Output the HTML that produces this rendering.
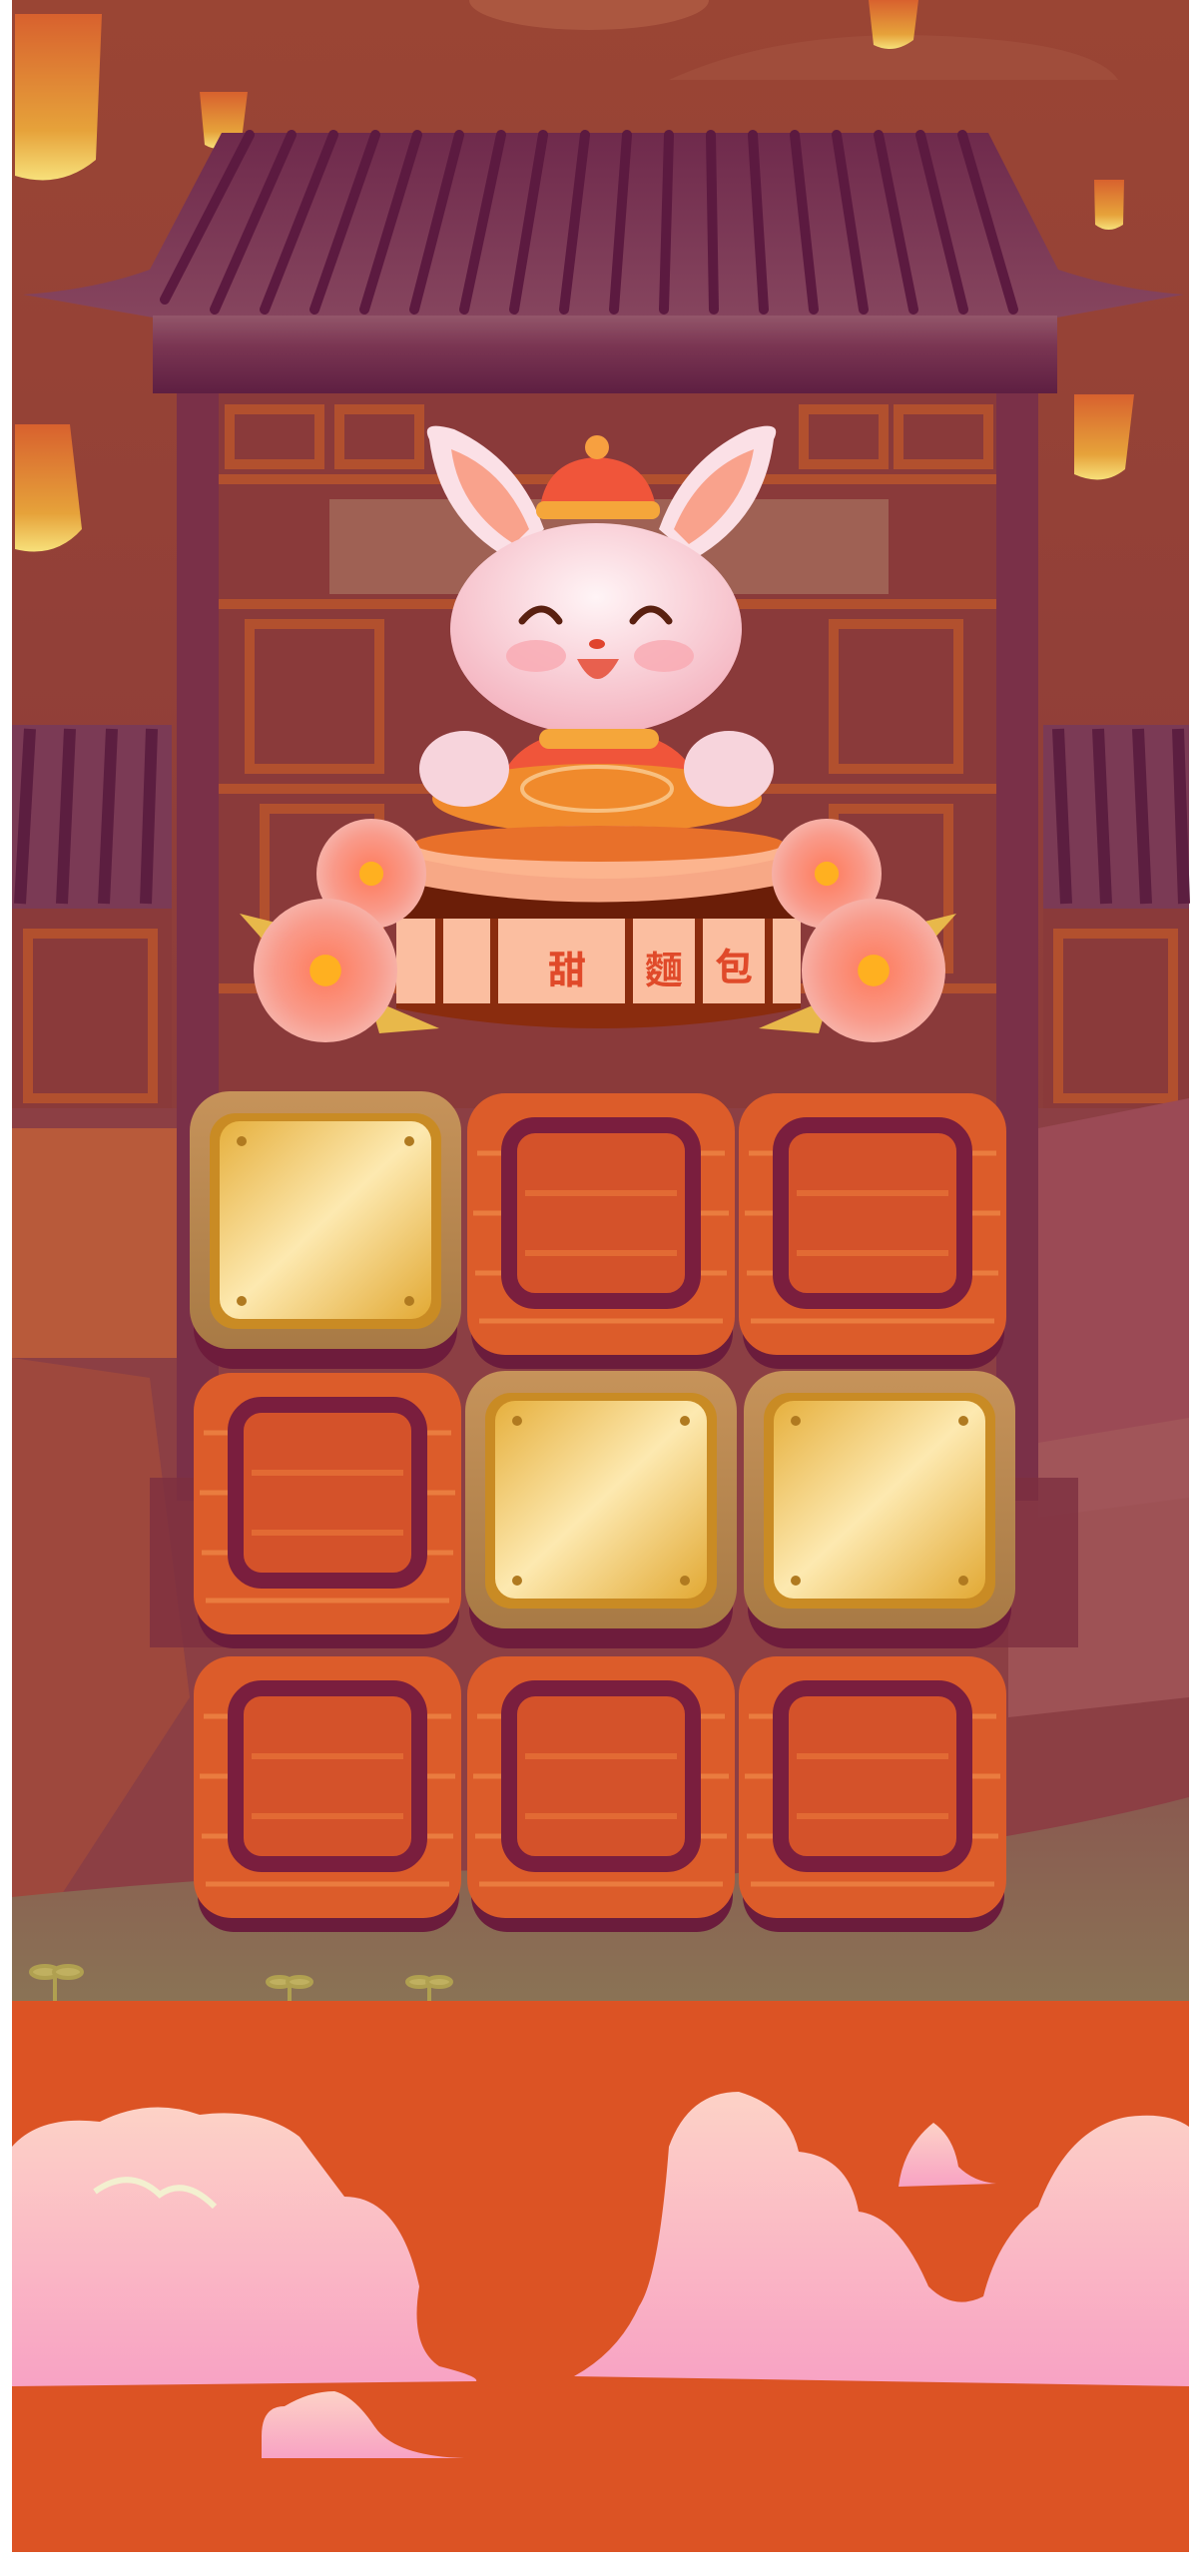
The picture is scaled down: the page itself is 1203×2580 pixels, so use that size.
<!DOCTYPE html>
<html><head><meta charset="utf-8"><style>
html,body{margin:0;padding:0;background:#fff;width:1203px;height:2580px;overflow:hidden}
svg{display:block}
</style></head><body>
<svg width="1203" height="2580" viewBox="0 0 1203 2580" xmlns="http://www.w3.org/2000/svg">
<defs>
<linearGradient id="sky" x1="0" y1="0" x2="0" y2="1"><stop offset="0" stop-color="#9a4534"/><stop offset="0.5" stop-color="#8e3d3a"/><stop offset="1" stop-color="#7c3a45"/></linearGradient>
<linearGradient id="roof" x1="0" y1="0" x2="0" y2="1"><stop offset="0" stop-color="#6f2a4c"/><stop offset="1" stop-color="#86455e"/></linearGradient>
<linearGradient id="beam" x1="0" y1="0" x2="0" y2="1"><stop offset="0" stop-color="#93566a"/><stop offset="0.4" stop-color="#7a3552"/><stop offset="1" stop-color="#5e1f42"/></linearGradient>
<linearGradient id="lant" x1="0" y1="0" x2="0" y2="1"><stop offset="0" stop-color="#d8612e"/><stop offset="0.7" stop-color="#e6a23a"/><stop offset="1" stop-color="#f7e07a"/></linearGradient>
<linearGradient id="gold" x1="0" y1="0" x2="1" y2="1"><stop offset="0" stop-color="#e6b03e"/><stop offset="0.5" stop-color="#fde9b0"/><stop offset="1" stop-color="#e2a934"/></linearGradient>
<linearGradient id="woodf" x1="0" y1="0" x2="0" y2="1"><stop offset="0" stop-color="#c6935a"/><stop offset="1" stop-color="#a87a45"/></linearGradient>
<radialGradient id="head" cx="0.5" cy="0.35" r="0.65"><stop offset="0" stop-color="#fff4f6"/><stop offset="1" stop-color="#f4b3bf"/></radialGradient>
<radialGradient id="fl" cx="0.5" cy="0.5" r="0.5"><stop offset="0" stop-color="#ff7a5a"/><stop offset="0.7" stop-color="#f99a8a"/><stop offset="1" stop-color="#f7b0a6"/></radialGradient>
<linearGradient id="cloud" x1="0" y1="0" x2="0" y2="1"><stop offset="0" stop-color="#fdd2c6"/><stop offset="1" stop-color="#f8a2c4"/></linearGradient>
<linearGradient id="ground" x1="0" y1="0" x2="0" y2="1"><stop offset="0" stop-color="#8a5a50"/><stop offset="1" stop-color="#8a7355"/></linearGradient>
<g id="wood">
  <rect x="4" y="18" width="262" height="258" rx="36" fill="#6b1c3c"/>
  <rect x="0" y="0" width="268" height="262" rx="38" fill="#dc5c2a"/>
  <path d="M10 60 H258 M6 120 H262 M8 180 H260 M12 228 H256" stroke="#f08a48" stroke-width="5" fill="none" opacity="0.7"/>
  <rect x="42" y="32" width="184" height="176" rx="26" fill="#d4522a" stroke="#7a1e3e" stroke-width="16"/>
  <path d="M58 100 H210 M58 160 H210" stroke="#e26a34" stroke-width="6"/>
</g>
<g id="goldt">
  <rect x="4" y="20" width="264" height="258" rx="40" fill="#6e1c3c"/>
  <rect x="0" y="0" width="272" height="258" rx="40" fill="url(#woodf)"/>
  <rect x="20" y="22" width="232" height="216" rx="26" fill="#c98b24"/>
  <rect x="30" y="30" width="212" height="198" rx="20" fill="url(#gold)"/>
  <circle cx="52" cy="50" r="5" fill="#b07a20"/><circle cx="220" cy="50" r="5" fill="#b07a20"/>
  <circle cx="52" cy="210" r="5" fill="#b07a20"/><circle cx="220" cy="210" r="5" fill="#b07a20"/>
</g>
<g id="flower">
  <circle r="1" fill="url(#fl)"/>
  <circle r="0.22" fill="#ffb020"/>
</g>
</defs>
<rect x="12" y="0" width="1179" height="2005" fill="url(#sky)"/>
<ellipse cx="590" cy="0" rx="120" ry="30" fill="#b8644a" opacity="0.6"/>
<path d="M670 80 Q800 20 1000 40 Q1100 50 1120 80 Z" fill="#a3513f" opacity="0.7"/>
<!-- lanterns -->
<path d="M15 14 H102 L96 160 Q60 190 15 176 Z" fill="url(#lant)"/>
<path d="M15 425 H70 L82 530 Q55 560 15 550 Z" fill="url(#lant)"/>
<path d="M200 92 H248 L242 140 Q222 155 205 145 Z" fill="url(#lant)"/>
<path d="M870 0 H920 L915 40 Q895 55 875 45 Z" fill="url(#lant)"/>
<path d="M1096 180 H1126 L1125 225 Q1110 235 1097 225 Z" fill="url(#lant)"/>
<path d="M1076 395 H1136 L1127 470 Q1105 488 1076 475 Z" fill="url(#lant)"/>
<!-- lattice area -->
<rect x="215" y="393" width="785" height="720" fill="#8a3a3a"/>
<rect x="330" y="500" width="560" height="95" fill="#a87260" opacity="0.7"/>
<g stroke="#b2502e" stroke-width="10" fill="none">
<path d="M215 480 H1000 M215 605 H1000 M215 790 H1000 M215 990 H1000"/>
<rect x="230" y="410" width="90" height="55"/><rect x="340" y="410" width="80" height="55"/>
<rect x="805" y="410" width="80" height="55"/><rect x="900" y="410" width="90" height="55"/>
<rect x="250" y="625" width="130" height="145"/><rect x="265" y="810" width="115" height="160"/>
<rect x="835" y="625" width="125" height="145"/><rect x="835" y="810" width="115" height="160"/>
</g>
<!-- side roofs -->
<rect x="12" y="726" width="160" height="190" fill="#7b3a55"/>
<g stroke="#5c1e40" stroke-width="12"><path d="M30 730 L20 905 M70 730 L62 905 M112 730 L104 905 M152 730 L146 905"/></g>
<rect x="12" y="910" width="160" height="210" fill="#8a3a3a"/>
<rect x="28" y="935" width="125" height="165" fill="none" stroke="#b2502e" stroke-width="10"/>
<rect x="1045" y="726" width="146" height="190" fill="#7b3a55"/>
<g stroke="#5c1e40" stroke-width="12"><path d="M1060 730 L1068 905 M1100 730 L1108 905 M1140 730 L1148 905 M1180 730 L1186 905"/></g>
<rect x="1045" y="910" width="146" height="210" fill="#8a3a3a"/>
<rect x="1060" y="935" width="115" height="165" fill="none" stroke="#b2502e" stroke-width="10"/>
<!-- lower scene -->
<rect x="12" y="1110" width="1179" height="800" fill="#8c3f44"/>
<path d="M12 1130 H180 V1360 H12 Z" fill="#b85a3a"/>
<path d="M1040 1130 L1191 1100 V1500 L1040 1520 Z" fill="#9b4a55"/>
<path d="M12 1360 L150 1380 L190 1700 L60 1900 L12 1900 Z" fill="#a54d3b" opacity="0.7"/>
<path d="M1010 1450 L1191 1420 V1700 L1010 1720 Z" fill="#a3585a" opacity="0.8"/>
<path d="M12 1900 Q400 1860 700 1880 Q1000 1850 1191 1800 V2005 H12 Z" fill="url(#ground)"/>
<!-- pillars -->
<rect x="177" y="393" width="42" height="1110" fill="#7a3048"/>
<rect x="998" y="393" width="42" height="1110" fill="#7a3048"/>
<rect x="150" y="1480" width="100" height="170" fill="#7d3040" opacity="0.8"/>
<rect x="980" y="1480" width="100" height="170" fill="#7d3040" opacity="0.8"/>
<!-- main roof -->
<path d="M222 133 H990 L1060 270 Q1120 290 1186 295 L1059 318 H153 L23 295 Q95 290 150 270 Z" fill="url(#roof)"/>
<g stroke="#5c1a40" stroke-width="10" stroke-linecap="round">
<path d="M250 135 L165 300 M292 135 L215 310 M334 135 L265 310 M376 135 L315 310 M418 135 L365 310 M460 135 L415 310 M502 135 L465 310 M544 135 L515 310 M586 135 L565 310 M628 135 L615 310 M670 135 L665 310 M712 135 L715 310 M754 135 L765 310 M796 135 L815 310 M838 135 L865 310 M880 135 L915 310 M922 135 L965 310 M964 135 L1015 310"/>
</g>
<rect x="153" y="316" width="906" height="78" fill="url(#beam)"/>
<!-- bunny -->
<path d="M430 440 Q420 420 455 430 Q520 460 545 530 L510 560 Q440 520 430 440 Z" fill="#fbe0e6"/>
<path d="M452 450 Q505 470 530 530 L515 545 Q460 510 452 450 Z" fill="#f9a28c"/>
<path d="M775 440 Q785 420 750 430 Q685 460 660 530 L695 560 Q765 520 775 440 Z" fill="#fbe0e6"/>
<path d="M755 450 Q700 470 675 530 L690 545 Q745 510 755 450 Z" fill="#f9a28c"/>
<path d="M540 515 Q545 460 598 458 Q652 460 658 515 Z" fill="#f0553a"/>
<circle cx="598" cy="448" r="12" fill="#f7a040"/>
<rect x="537" y="502" width="124" height="18" rx="8" fill="#f5a63a"/>
<path d="M500 790 Q510 735 598 728 Q690 735 700 790 Z" fill="#f0553a"/>
<ellipse cx="597" cy="630" rx="146" ry="106" fill="url(#head)"/>
<ellipse cx="537" cy="657" rx="30" ry="16" fill="#f9a9b2" opacity="0.8"/>
<ellipse cx="665" cy="657" rx="30" ry="16" fill="#f9a9b2" opacity="0.8"/>
<path d="M523 622 Q543 598 560 622" stroke="#5a2010" stroke-width="7" fill="none" stroke-linecap="round"/>
<path d="M634 622 Q652 598 670 622" stroke="#5a2010" stroke-width="7" fill="none" stroke-linecap="round"/>
<ellipse cx="598" cy="645" rx="8" ry="5" fill="#e0442e"/>
<path d="M578 660 Q598 700 620 660 Z" fill="#e8604e"/>
<rect x="540" y="730" width="120" height="20" rx="10" fill="#f5a63a"/>
<ellipse cx="598" cy="800" rx="165" ry="35" fill="#f08a2c"/>
<ellipse cx="598" cy="790" rx="75" ry="22" fill="none" stroke="#f8c080" stroke-width="4"/>
<ellipse cx="465" cy="770" rx="45" ry="38" fill="#f7d4dc"/>
<ellipse cx="730" cy="770" rx="45" ry="38" fill="#f7d4dc"/>
<!-- drum -->
<path d="M397 855 V1010 Q600 1050 802 1010 V855 Z" fill="#8a2c0e"/>
<rect x="397" y="920" width="405" height="85" fill="#fbbea0"/>
<g stroke="#8a2c0e" stroke-width="8"><path d="M440 920 V1005 M495 920 V1005 M630 920 V1005 M700 920 V1005 M770 920 V1005"/></g>
<rect x="397" y="880" width="405" height="40" fill="#6b1e08"/>
<ellipse cx="600" cy="855" rx="203" ry="28" fill="#fcb48e"/>
<path d="M397 855 Q600 905 802 855 V882 Q600 925 397 882 Z" fill="#f7a886"/>
<ellipse cx="600" cy="845" rx="185" ry="18" fill="#e8702a"/>
<text x="568" y="985" font-family="Liberation Sans, 'Noto Sans CJK TC', sans-serif" font-size="38" font-weight="bold" fill="#e04a2a" text-anchor="middle">甜</text>
<text x="665" y="985" font-family="Liberation Sans, 'Noto Sans CJK TC', sans-serif" font-size="38" font-weight="bold" fill="#e04a2a" text-anchor="middle">麵</text>
<text x="735" y="982" font-family="Liberation Sans, 'Noto Sans CJK TC', sans-serif" font-size="38" font-weight="bold" fill="#e04a2a" text-anchor="middle">包</text>
<!-- leaves & flowers -->
<path d="M240 915 L300 930 L280 960 Z" fill="#e8b84a"/>
<path d="M370 1000 L440 1030 L380 1035 Z" fill="#e8b84a"/>
<path d="M958 915 L898 930 L918 960 Z" fill="#e8b84a"/>
<path d="M830 1000 L760 1030 L820 1035 Z" fill="#e8b84a"/>
<use href="#flower" transform="translate(372,875) scale(55)"/>
<use href="#flower" transform="translate(828,875) scale(55)"/>
<use href="#flower" transform="translate(326,972) scale(72)"/>
<use href="#flower" transform="translate(875,972) scale(72)"/>
<!-- tiles -->
<use href="#goldt" transform="translate(190,1093)"/>
<use href="#wood" transform="translate(468,1095)"/>
<use href="#wood" transform="translate(740,1095)"/>
<use href="#wood" transform="translate(194,1375)"/>
<use href="#goldt" transform="translate(466,1373)"/>
<use href="#goldt" transform="translate(745,1373)"/>
<use href="#wood" transform="translate(194,1659)"/>
<use href="#wood" transform="translate(468,1659)"/>
<use href="#wood" transform="translate(740,1659)"/>
<!-- plants -->
<g stroke="#b0a050" stroke-width="4" fill="#c0b060">
<path d="M55 2005 V1975"/><ellipse cx="45" cy="1975" rx="14" ry="6"/><ellipse cx="68" cy="1975" rx="14" ry="6"/>
<path d="M290 2005 V1985"/><ellipse cx="280" cy="1985" rx="12" ry="5"/><ellipse cx="300" cy="1985" rx="12" ry="5"/>
<path d="M430 2005 V1985"/><ellipse cx="420" cy="1985" rx="12" ry="5"/><ellipse cx="440" cy="1985" rx="12" ry="5"/>
</g>
<!-- orange section -->
<rect x="12" y="2004" width="1179" height="552" fill="#dc5324"/>
<path d="M12 2150 Q40 2118 100 2125 Q150 2100 200 2118 Q260 2110 300 2140 Q330 2180 345 2200 Q400 2200 420 2290 Q410 2350 440 2370 Q480 2380 477 2385 L12 2390 Z" fill="url(#cloud)"/>
<path d="M95 2195 Q130 2170 160 2198 Q185 2180 215 2210" stroke="#f3f0d0" stroke-width="6" fill="none"/>
<path d="M575 2380 Q620 2355 640 2310 Q660 2280 670 2150 Q690 2095 740 2095 Q790 2110 800 2155 Q850 2160 860 2215 Q900 2220 930 2290 Q955 2315 985 2300 Q1000 2240 1040 2210 Q1070 2130 1130 2120 Q1170 2115 1191 2130 V2390 Z" fill="url(#cloud)"/>
<path d="M900 2190 Q905 2150 935 2126 Q955 2140 960 2170 Q975 2185 998 2187 Z" fill="url(#cloud)"/>
<path d="M262 2440 Q262 2410 285 2410 Q310 2395 335 2395 Q355 2400 375 2430 Q395 2460 465 2462 L262 2462 Z" fill="url(#cloud)"/>
</svg>
</body></html>
